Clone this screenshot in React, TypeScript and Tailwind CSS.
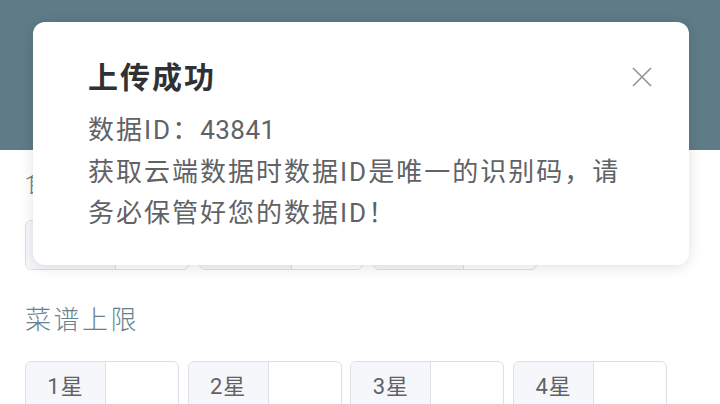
import React from 'react';

const font = { fontFamily: 'Roboto, "Noto Sans CJK SC", sans-serif' };

function InputGroup({ label, w, pw }: { label: string; w: string; pw: string }) {
  return (
    <div className={`flex h-[50px] ${w} shrink-0 rounded-[6px] border border-[#dcdfe6] overflow-hidden bg-white`}>
      <div className={`${pw} shrink-0 flex items-center justify-center bg-[#f5f7fa] border-r border-[#dcdfe6] text-[22px] tracking-[1px] text-[#606266]`}>
        {label}
      </div>
      <div className="flex-1" />
    </div>
  );
}

export default function App() {
  return (
    <div className="relative w-[720px] h-[404px] overflow-hidden bg-white" style={font}>
      {/* header */}
      <div className="h-[150px] bg-[#5f7b88]" />

      {/* form */}
      <div className="px-[25px]">
        <div className="mt-[15px] h-[36px] leading-[36px] text-[26px] tracking-[2.5px] text-[#67838f] font-light">食材上限</div>
        <div className="mt-[19px] flex gap-[10px]">
          <InputGroup label="1星" w="w-[164px]" pw="w-[90px]" />
          <InputGroup label="2星" w="w-[164px]" pw="w-[92px]" />
          <InputGroup label="3星" w="w-[164px]" pw="w-[90px]" />
        </div>
        <div className="mt-[32px] h-[36px] leading-[36px] text-[26px] tracking-[2.5px] text-[#67838f] font-light">菜谱上限</div>
        <div className="mt-[23px] flex gap-[8.7px]">
          <InputGroup label="1星" w="w-[154px]" pw="w-[80px]" />
          <InputGroup label="2星" w="w-[154px]" pw="w-[80px]" />
          <InputGroup label="3星" w="w-[154px]" pw="w-[80px]" />
          <InputGroup label="4星" w="w-[154px]" pw="w-[80px]" />
        </div>
      </div>

      {/* notification */}
      <div className="absolute left-[33px] top-[22px] w-[656px] h-[243px] rounded-[12px] bg-white shadow-[0_2px_14px_rgba(0,0,0,0.12)] pl-[55px] pt-[36px]">
        <div className="h-[40px] leading-[40px] text-[30px] tracking-[2px] font-bold text-[#303133]">上传成功</div>
        <div className="mt-[12px] text-[26px] leading-[41.5px] tracking-[2px] text-[#606266] whitespace-nowrap">
          <div>
            数据ID：<span className="tracking-[0.5px]">43841</span>
          </div>
          <div>获取云端数据时数据ID是唯一的识别码，请</div>
          <div>务必保管好您的数据ID！</div>
        </div>
        <button className="absolute right-[37px] top-[45px] w-[20px] h-[20px]">
          <svg viewBox="0 0 20 20" width="20" height="20" fill="none" stroke="#909399" strokeWidth="1.6">
            <path d="M1 1L19 19M19 1L1 19" />
          </svg>
        </button>
      </div>
    </div>
  );
}
